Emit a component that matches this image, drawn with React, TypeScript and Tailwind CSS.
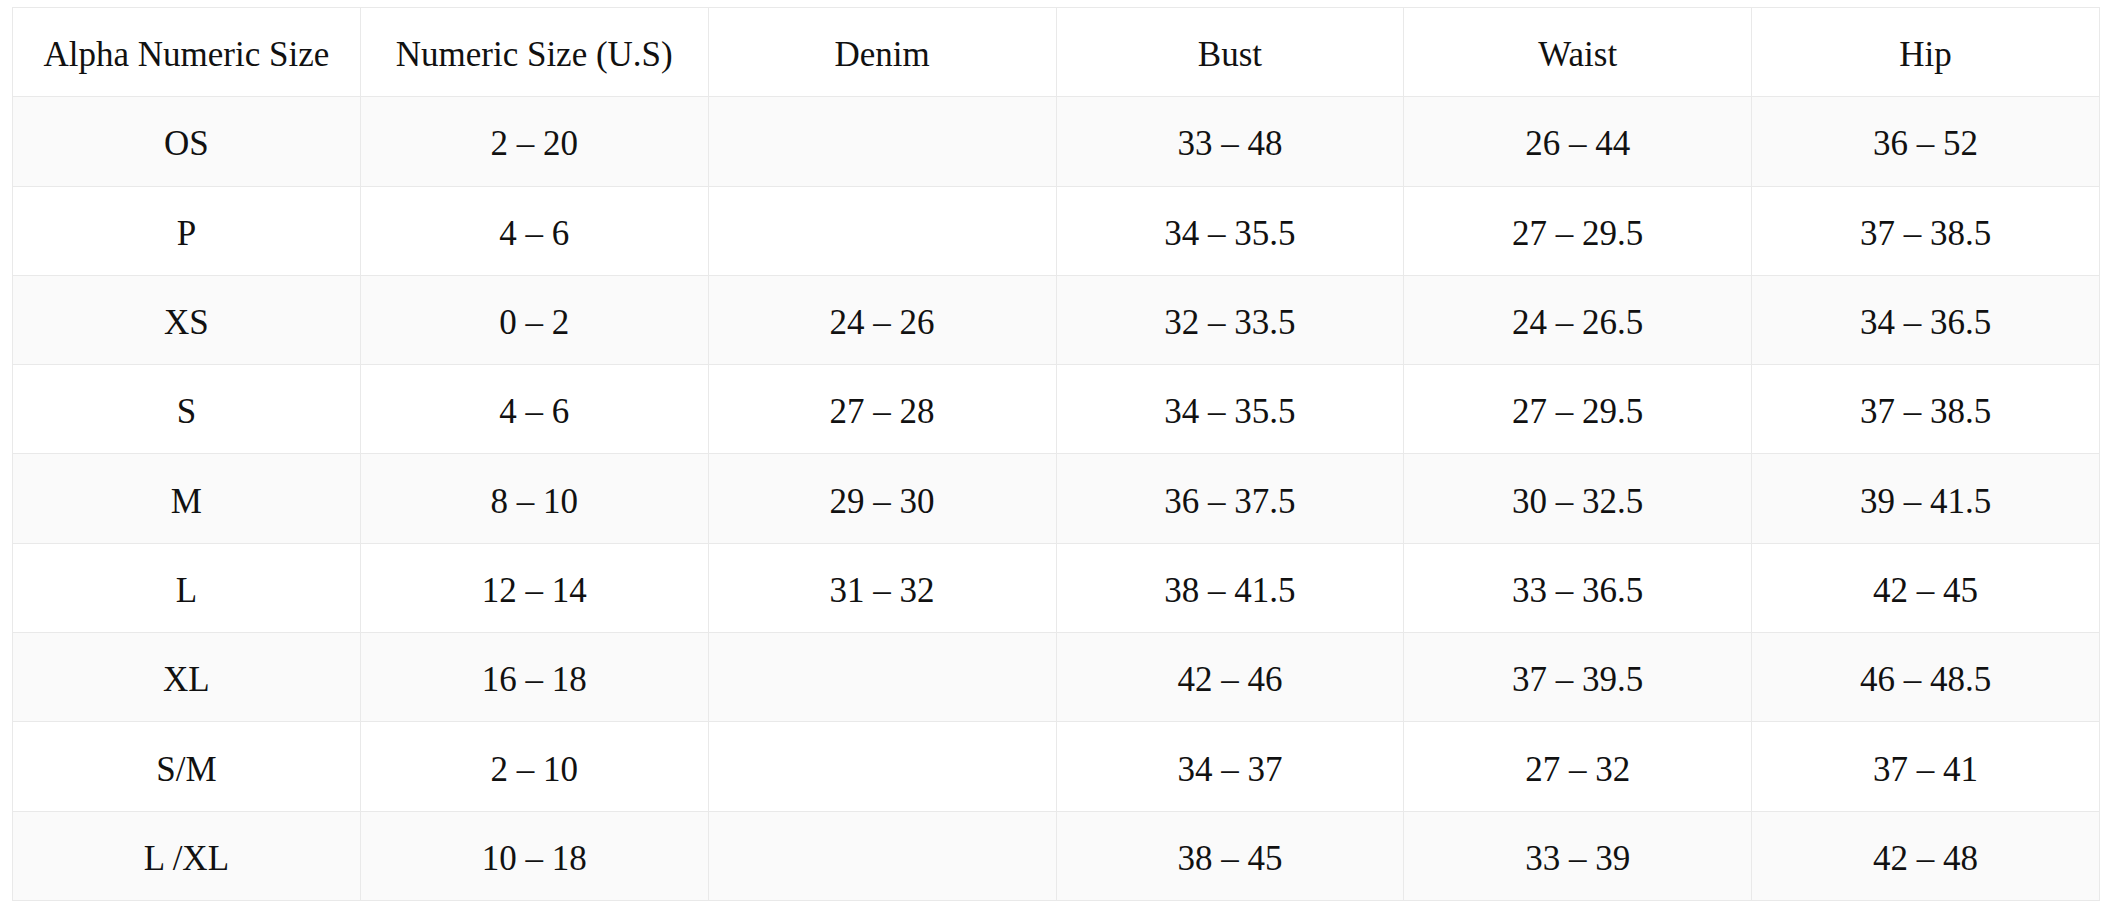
import React from "react";

type Row = {
  alpha: string;
  numeric: string;
  denim: string;
  bust: string;
  waist: string;
  hip: string;
};

const headers = ["Alpha Numeric Size", "Numeric Size (U.S)", "Denim", "Bust", "Waist", "Hip"];

const rows: Row[] = [
  { alpha: "OS", numeric: "2 – 20", denim: "", bust: "33 – 48", waist: "26 – 44", hip: "36 – 52" },
  { alpha: "P", numeric: "4 – 6", denim: "", bust: "34 – 35.5", waist: "27 – 29.5", hip: "37 – 38.5" },
  { alpha: "XS", numeric: "0 – 2", denim: "24 – 26", bust: "32 – 33.5", waist: "24 – 26.5", hip: "34 – 36.5" },
  { alpha: "S", numeric: "4 – 6", denim: "27 – 28", bust: "34 – 35.5", waist: "27 – 29.5", hip: "37 – 38.5" },
  { alpha: "M", numeric: "8 – 10", denim: "29 – 30", bust: "36 – 37.5", waist: "30 – 32.5", hip: "39 – 41.5" },
  { alpha: "L", numeric: "12 – 14", denim: "31 – 32", bust: "38 – 41.5", waist: "33 – 36.5", hip: "42 – 45" },
  { alpha: "XL", numeric: "16 – 18", denim: "", bust: "42 – 46", waist: "37 – 39.5", hip: "46 – 48.5" },
  { alpha: "S/M", numeric: "2 – 10", denim: "", bust: "34 – 37", waist: "27 – 32", hip: "37 – 41" },
  { alpha: "L /XL", numeric: "10 – 18", denim: "", bust: "38 – 45", waist: "33 – 39", hip: "42 – 48" },
];

function Cell({ children }: { children?: React.ReactNode }) {
  return (
    <div className="flex items-center justify-center pt-[5px] border-r border-b border-[#e9e9e9] h-[89.3px]">
      {children}
    </div>
  );
}

export default function App() {
  return (
    <div className="w-[2116px] h-[910px] bg-white pt-[7px] pl-[12px]">
      <div
        className="w-[2088px] border-l border-t border-[#e9e9e9] text-[35px] leading-none text-[#111]"
        style={{ fontFamily: '"Liberation Serif", "Times New Roman", serif' }}
      >
        <div className="grid grid-cols-6 bg-white">
          {headers.map((h) => (
            <Cell key={h}>{h}</Cell>
          ))}
        </div>
        {rows.map((r, i) => (
          <div
            key={r.alpha}
            className={i % 2 === 0 ? "grid grid-cols-6 bg-[#fafafa]" : "grid grid-cols-6 bg-white"}
          >
            <Cell>{r.alpha}</Cell>
            <Cell>{r.numeric}</Cell>
            <Cell>{r.denim}</Cell>
            <Cell>{r.bust}</Cell>
            <Cell>{r.waist}</Cell>
            <Cell>{r.hip}</Cell>
          </div>
        ))}
      </div>
    </div>
  );
}
